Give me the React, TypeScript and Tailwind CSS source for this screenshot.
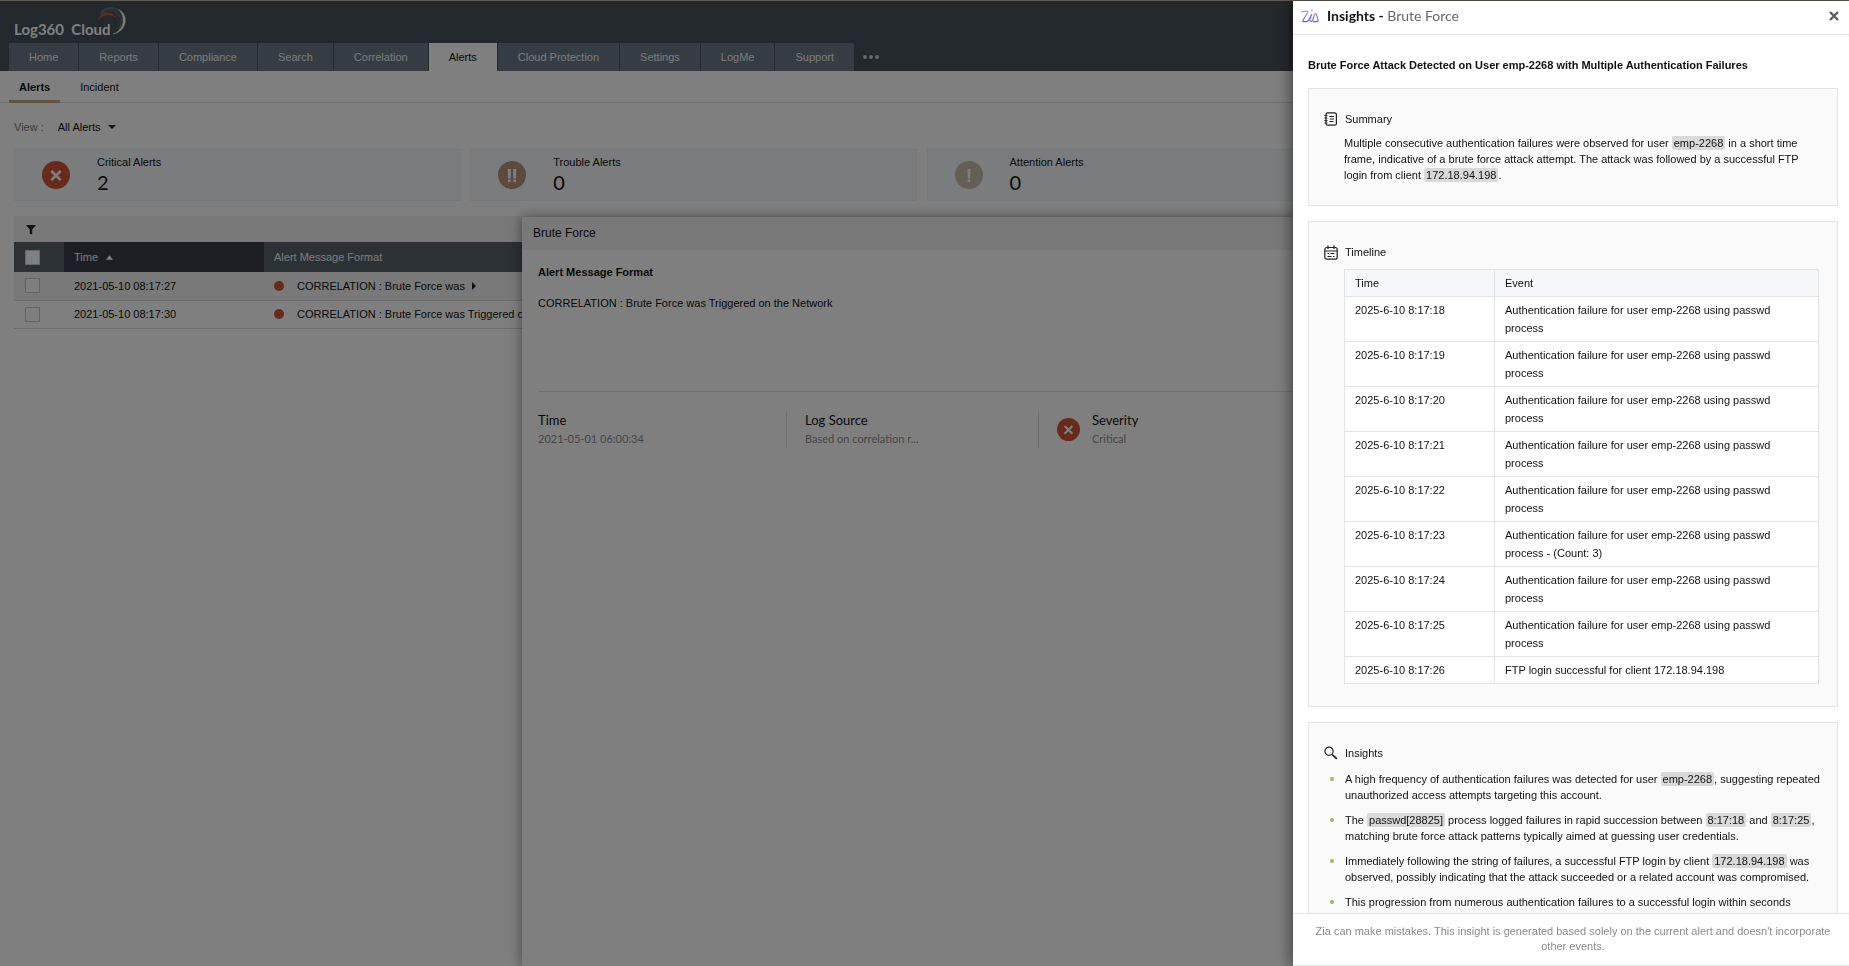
import { Fragment, type ReactNode } from 'react';

const tabs = [
  'Home',
  'Reports',
  'Compliance',
  'Search',
  'Correlation',
  'Alerts',
  'Cloud Protection',
  'Settings',
  'LogMe',
  'Support',
];

type Level = 'critical' | 'trouble' | 'attention';

const stats: { label: string; count: number; level: Level }[] = [
  { label: 'Critical Alerts', count: 2, level: 'critical' },
  { label: 'Trouble Alerts', count: 0, level: 'trouble' },
  { label: 'Attention Alerts', count: 0, level: 'attention' },
];

const alerts = [
  {
    id: 1,
    time: '2021-05-10 08:17:27',
    message: 'CORRELATION : Brute Force was',
    open: true,
  },
  {
    id: 2,
    time: '2021-05-10 08:17:30',
    message: 'CORRELATION : Brute Force was Triggered on the Network',
    open: false,
  },
];

const failure = 'Authentication failure for user emp-2268 using passwd process';

const timeline = [
  { time: '2025-6-10 8:17:18', event: failure },
  { time: '2025-6-10 8:17:19', event: failure },
  { time: '2025-6-10 8:17:20', event: failure },
  { time: '2025-6-10 8:17:21', event: failure },
  { time: '2025-6-10 8:17:22', event: failure },
  { time: '2025-6-10 8:17:23', event: `${failure} - (Count: 3)` },
  { time: '2025-6-10 8:17:24', event: failure },
  { time: '2025-6-10 8:17:25', event: failure },
  { time: '2025-6-10 8:17:26', event: 'FTP login successful for client 172.18.94.198' },
];

// backticks mark the highlighted values
const insights = [
  'A high frequency of authentication failures was detected for user `emp-2268`, suggesting repeated unauthorized access attempts targeting this account.',
  'The `passwd[28825]` process logged failures in rapid succession between `8:17:18` and `8:17:25`, matching brute force attack patterns typically aimed at guessing user credentials.',
  'Immediately following the string of failures, a successful FTP login by client `172.18.94.198` was observed, possibly indicating that the attack succeeded or a related account was compromised.',
  'This progression from numerous authentication failures to a successful login within seconds',
];

function RichText({ text }: { text: string }) {
  return (
    <>
      {text.split('`').map((part, i) =>
        i % 2 === 1 ? (
          <code
            key={i}
            className="rounded-xs bg-[#d9d9d9] px-0.5 py-px font-['Liberation_Sans',Arial,sans-serif] text-[11px]"
          >
            {part}
          </code>
        ) : (
          <Fragment key={i}>{part}</Fragment>
        )
      )}
    </>
  );
}

const levelColors: Record<Level, string> = {
  critical: '#cf5538',
  trouble: '#b8937e',
  attention: '#c9bfa8',
};

function LevelIcon({ level, className }: { level: Level; className: string }) {
  return (
    <svg viewBox="0 0 28 28" className={className} aria-hidden="true">
      <circle cx="14" cy="14" r="14" fill={levelColors[level]} />
      {level === 'critical' && (
        <path d="M9.3 9.8l9.400 9.400M18.700 9.8l-9.400 9.400" stroke="#fff" strokeWidth="2.600" />
      )}
      {level === 'trouble' && (
        <g fill="#fff">
          <path d="M9.6 8h3.4l-.5 9.5h-2.4zM15 8h3.4l-.5 9.5h-2.4z" />
          <circle cx="11.3" cy="19.7" r="1.5" />
          <circle cx="16.7" cy="19.7" r="1.5" />
        </g>
      )}
      {level === 'attention' && (
        <g fill="#fff">
          <path d="M12.4 8h3.2l-.6 9.5h-2z" />
          <circle cx="14" cy="19.7" r="1.5" />
        </g>
      )}
    </svg>
  );
}

function Logo() {
  return (
    <a
      href="#"
      className="relative ml-3.5 font-[Lato,sans-serif] text-[15px] leading-5 font-bold whitespace-pre text-white"
    >
      Log360  Cloud
      <svg
        viewBox="0 0 28 28"
        className="absolute -top-3 left-[84px] h-7 w-7"
        fill="none"
        aria-hidden="true"
      >
        <path d="M3 5.500C8-1 19-.5 24 7c3 5.500 1.500 12-3 16.500" stroke="#6a7886" strokeWidth="1.400" />
        <path d="M2.500 8C7 1.500 16 1.500 21 8c3.500 5 3 10-.5 15" stroke="#5f6d7b" strokeWidth="1.400" />
        <path d="M7 3.800c6-1.500 11 1.500 13 6.200 1.500 4 1.200 8-.7 11.500" stroke="#57646f" strokeWidth="1.200" />
        <path d="M.5 12.500C3 5 12 3.500 17.500 10 12.500 6.300 5 6.500.5 12.500z" fill="#e4512f" stroke="#e4512f" strokeWidth=".8" />
        <path d="M21 2.500c5 3 7 8 6.200 12.500-.9 6-5.400 11-12.200 12 6.500-2.500 9.700-7 10.200-12.500C25.600 10 24 6 21 2.500z" fill="#fff" stroke="#e9dccb" strokeWidth=".6" />
      </svg>
    </a>
  );
}

function ZiaIcon() {
  return (
    <svg viewBox="0 0 18 14" className="h-3.5 w-[18px]" fill="none" aria-hidden="true">
      <defs>
        <linearGradient id="zia" gradientUnits="userSpaceOnUse" x1="0" y1="1" x2="0" y2="13">
          <stop offset="0" stopColor="#e48ad0" />
          <stop offset="1" stopColor="#4a6cf0" />
        </linearGradient>
      </defs>
      <g stroke="url(#zia)" strokeWidth="1.2" strokeLinecap="round" strokeLinejoin="round">
        <path d="M1 3.200c0-.8.400-.9 1-.9h4.200c.7 0 .9.400.6 1L1.900 11.500c-.4.800-.1 1.200.6 1.200h3.200c2.500 0 3-5.200 5-7.200" />
        <path d="M10.700 5.500c-1 2.500-2 4-1.800 5.700.2 1.900 2 1.500 2.700.2 1-2 1.500-6.700 2.900-6.700 1.200 0 1.900 4 2.500 6.300.3 1.100-.1 1.700-1.100 1.700h-3.400" />
      </g>
      <circle cx="10.800" cy="1.500" r="1" fill="#e48ad0" />
    </svg>
  );
}

function SummaryIcon() {
  return (
    <svg viewBox="0 0 14 14" className="h-3.5 w-3.5" fill="none" stroke="#222" strokeWidth="1.2" aria-hidden="true">
      <rect x="2" y=".8" width="10.400" height="12.400" rx="1.800" />
      <path d="M.4 3.500h3M.4 6h3M.4 8.500h3M.4 11h3M5.500 4.500h4.500M6 7h4M5.500 9.500h4" />
    </svg>
  );
}

function TimelineIcon() {
  return (
    <svg viewBox="0 0 14 15" className="h-[15px] w-3.5" fill="none" stroke="#222" strokeWidth="1.2" aria-hidden="true">
      <rect x=".8" y="2.500" width="12.400" height="11.700" rx="2" />
      <path d="M.8 6h12.400M4 .5v3.500M10 .5v3.500" />
      <path d="M3.500 8.500h1.500M6.500 8.500h4M3.500 11.500h4M9 11.500h1.500" strokeWidth="1" />
    </svg>
  );
}

function SearchIcon() {
  return (
    <svg viewBox="0 0 14 14" className="h-3.5 w-3.5" fill="none" stroke="#222" aria-hidden="true">
      <circle cx="5" cy="5.300" r="4.100" strokeWidth="1.200" />
      <path d="M8 8.300l1.500 1.400" strokeWidth="1.200" />
      <path d="M9.300 9.600l3 2.800" strokeWidth="1.800" strokeLinecap="round" />
    </svg>
  );
}

interface PanelCardProps {
  title: string;
  icon: ReactNode;
  children: ReactNode;
}

function PanelCard({ title, icon, children }: PanelCardProps) {
  return (
    <section className="border border-[#e3e3e3] bg-[#fafafa] pt-5 pr-[18px] pb-[22px] pl-[15px]">
      <h3 className="flex h-5 items-center gap-[7px]">
        {icon}
        {title}
      </h3>
      {children}
    </section>
  );
}

function AlertsTable() {
  return (
    <div className="mt-[15px] ml-3.5">
      <div className="flex h-[26px] items-center bg-[#f2f2f2] pt-0.5 pl-3">
        <button aria-label="Filter">
          <svg viewBox="0 0 10 10" className="h-2.5 w-2.5" aria-hidden="true">
            <path d="M0 0h10L6.200 4.500V9.800L3.800 8.500v-4z" fill="#222" />
          </svg>
        </button>
      </div>
      <table className="w-full table-fixed border-collapse text-left">
        <thead>
          <tr className="h-[30px] bg-[#56626a] text-[#f5f5f5]">
            <th className="w-[50px] pl-[11px]">
              <input
                type="checkbox"
                aria-label="Select all"
                className="block h-[15px] w-[15px] appearance-none border border-[#d6cfc0] bg-white"
              />
            </th>
            <th className="w-[200px] bg-[#363e46] pl-2.5 font-normal">
              <button className="flex items-center gap-2">
                Time
                <svg viewBox="0 0 8 5" className="h-[5px] w-[7px]" aria-hidden="true">
                  <path d="M0 5l4-5 4 5z" fill="#fff" />
                </svg>
              </button>
            </th>
            <th className="pl-2.5 font-normal">Alert Message Format</th>
          </tr>
        </thead>
        <tbody>
          {alerts.map((alert) => (
            <tr
              key={alert.id}
              className="h-7 border-b border-[#d5d8d8] odd:bg-[#f2f2f2]"
            >
              <td className="pl-[11px]">
                <input
                  type="checkbox"
                  aria-label={`Select alert ${alert.time}`}
                  className="block h-[15px] w-[15px] appearance-none border border-[#cfc8b8] bg-white"
                />
              </td>
              <td className="pl-2.5">{alert.time}</td>
              <td className="pl-2.5">
                <div className="flex items-center">
                  <span className="mr-[13px] h-2.5 w-2.5 rounded-full bg-[#cf5538]" />
                  {alert.message}
                  {alert.open && (
                    <svg viewBox="0 0 4 8" className="ml-[7px] h-2 w-1" aria-hidden="true">
                      <path d="M0 0l4 4-4 4z" fill="#222" />
                    </svg>
                  )}
                </div>
              </td>
            </tr>
          ))}
        </tbody>
      </table>
    </div>
  );
}

function AlertDrawer() {
  return (
    <aside className="absolute top-[217px] right-0 bottom-0 left-[522px] bg-white shadow-[-1px_0_12px_rgba(0,0,0,0.4)]">
      <h2 className="flex h-[33px] items-center bg-[#f2f2f2] pb-0.5 pl-[11px] text-xs">Brute Force</h2>
      <div className="px-4 pt-3.5">
        <h3 className="leading-4 font-bold">Alert Message Format</h3>
        <p className="mt-[15px] h-24 leading-4">
          CORRELATION : Brute Force was Triggered on the Network
        </p>
        <div className="flex border-t border-[#e3e3e3] pt-5 font-[Lato,sans-serif]">
          <div className="h-9 w-[249px] border-r border-[#dedede]">
            <h4 className="text-[13px] leading-4">Time</h4>
            <p className="mt-[3px] leading-4 text-[#8d8d8d]">2021-05-01 06:00:34</p>
          </div>
          <div className="h-9 w-[252px] border-r border-[#dedede] pl-[18px]">
            <h4 className="text-[13px] leading-4">Log Source</h4>
            <p className="mt-[3px] leading-4 text-[#8d8d8d]">Based on correlation r...</p>
          </div>
          <div className="flex items-start gap-3 pl-[18px]">
            <LevelIcon level="critical" className="mt-1.5 h-[23px] w-[23px]" />
            <div>
              <h4 className="text-[13px] leading-4">Severity</h4>
              <p className="mt-[3px] leading-4 text-[#8d8d8d]">Critical</p>
            </div>
          </div>
        </div>
      </div>
    </aside>
  );
}

function InsightsPanel() {
  return (
    <aside className="fixed top-px right-0 bottom-0 flex w-[556px] flex-col bg-white shadow-[-2px_0_14px_rgba(0,0,0,0.5)]">
      <header className="flex h-[34px] items-center border-b border-[#e3e3e3] pr-2.5 pb-1 pl-2">
        <ZiaIcon />
        <h2 className="ml-2 font-[Lato,sans-serif] text-sm font-bold">
          Insights - <span className="font-normal text-[#666]">Brute Force</span>
        </h2>
        <button className="ml-auto" aria-label="Close">
          <svg viewBox="0 0 10 10" className="h-2.5 w-2.5" aria-hidden="true">
            <path d="M1 1l8 8M9 1l-8 8" stroke="#5c5c5c" strokeWidth="2.400" />
          </svg>
        </button>
      </header>
      <div className="flex min-h-0 flex-1 flex-col gap-[15px] overflow-hidden pr-[11px] pl-[15px]">
        <h1 className="mt-[22px] leading-4 font-bold">
          Brute Force Attack Detected on User emp-2268 with Multiple Authentication Failures
        </h1>
        <PanelCard title="Summary" icon={<SummaryIcon />}>
          <p className="mt-1.5 pl-5 leading-4">
            <RichText text="Multiple consecutive authentication failures were observed for user `emp-2268` in a short time frame, indicative of a brute force attack attempt. The attack was followed by a successful FTP login from client `172.18.94.198`." />
          </p>
        </PanelCard>
        <PanelCard title="Timeline" icon={<TimelineIcon />}>
          <div className="mt-[7px] pl-5">
            <table className="w-full table-fixed border-collapse text-left leading-[18px]">
              <thead>
                <tr className="bg-[#f5f7f9]">
                  <th className="w-[150px] border border-[#e3e3e3] px-2.5 py-1 font-normal">Time</th>
                  <th className="border border-[#e3e3e3] px-2.5 py-1 font-normal">Event</th>
                </tr>
              </thead>
              <tbody>
                {timeline.map((row) => (
                  <tr key={row.time} className="bg-white align-top">
                    <td className="border border-[#e3e3e3] px-2.5 py-1">{row.time}</td>
                    <td className="border border-[#e3e3e3] py-1 pr-10 pl-2.5">{row.event}</td>
                  </tr>
                ))}
              </tbody>
            </table>
          </div>
        </PanelCard>
        <PanelCard title="Insights" icon={<SearchIcon />}>
          <ul className="mt-2 -mr-2 flex flex-col gap-[9px] pl-1.5">
            {insights.map((text) => (
              <li key={text} className="flex gap-[11px] leading-4">
                <span className="mt-1.5 h-1 w-1 shrink-0 rounded-full bg-[#8cc152]" />
                <p>
                  <RichText text={text} />
                </p>
              </li>
            ))}
          </ul>
        </PanelCard>
      </div>
      <footer className="border-y border-[#e3e3e3] pt-2.5 pr-4 pb-[11px] pl-5 text-center leading-[15px] text-[#8a8a8a]">
        Zia can make mistakes. This insight is generated based solely on the current alert and
        doesn't incorporate other events.
      </footer>
    </aside>
  );
}

function App() {
  return (
    <div className="relative h-screen overflow-hidden bg-white font-['Liberation_Sans',Arial,sans-serif] text-[11px] text-[#111]">
      <header className="border-t border-[#c0b9a5] bg-[#465058]">
        <div className="flex h-[42px] items-end pb-1">
          <Logo />
        </div>
        <nav className="flex h-7 items-stretch gap-px pl-[9px]">
          {tabs.map((tab) => (
            <a
              key={tab}
              href="#"
              className={
                tab === 'Alerts'
                  ? 'flex items-center bg-white px-5'
                  : 'flex items-center bg-[#6a7886] px-5 text-[#f5f5f5]'
              }
            >
              {tab}
            </a>
          ))}
          <button className="ml-2 flex items-center gap-0.5" aria-label="More">
            <span className="h-1 w-1 rounded-full bg-[#d0d0d0]" />
            <span className="h-1 w-1 rounded-full bg-[#d0d0d0]" />
            <span className="h-1 w-1 rounded-full bg-[#d0d0d0]" />
          </button>
        </nav>
      </header>
      <nav className="flex h-8 gap-2.5 border-b border-[#dcdfdf] pl-[9px]">
        <a
          href="#"
          className="-mb-px flex items-center border-b-3 border-[#c0a68c] px-2.5 pt-1 font-bold"
        >
          Alerts
        </a>
        <a href="#" className="flex items-center px-2.5 pt-0.5">
          Incident
        </a>
      </nav>
      <div className="flex h-[46px] items-center pt-0.5 pl-3.5">
        <span className="text-[#777]">View :</span>
        <button className="ml-3.5 flex items-center gap-[7px]">
          All Alerts
          <svg viewBox="0 0 8 4" className="h-1 w-2" aria-hidden="true">
            <path d="M0 0h8L4 4z" fill="#222" />
          </svg>
        </button>
      </div>
      <div className="grid grid-cols-4 gap-2.5 pr-5 pl-3.5">
        {stats.map((stat) => (
          <div
            key={stat.label}
            className="flex h-[52px] items-center gap-[27px] border border-[#eff1f3] bg-[#f6f8fa] pl-[27px]"
          >
            <LevelIcon level={stat.level} className="h-7 w-7" />
            <div className="pb-0.5">
              <p className="leading-4">{stat.label}</p>
              <p className="font-[Lato,sans-serif] text-xl leading-6">{stat.count}</p>
            </div>
          </div>
        ))}
      </div>
      <AlertsTable />
      <AlertDrawer />
      <div className="fixed inset-0 bg-black/50" />
      <InsightsPanel />
    </div>
  );
}

export default App;
